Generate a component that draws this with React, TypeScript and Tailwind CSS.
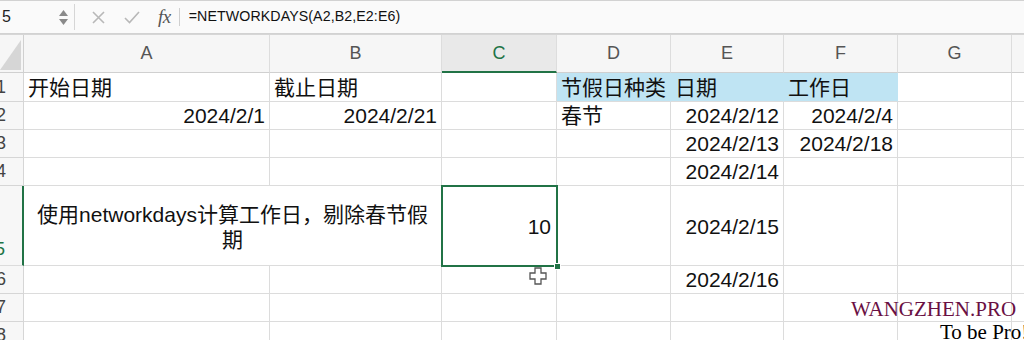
import React from 'react';

const cellFont = "font-['Liberation_Sans','Noto_Sans_CJK_SC',sans-serif]";

const cols = [
  { k: 'A', w: 'w-[246px]' },
  { k: 'B', w: 'w-[172px]' },
  { k: 'C', w: 'w-[115px]' },
  { k: 'D', w: 'w-[114px]' },
  { k: 'E', w: 'w-[113px]' },
  { k: 'F', w: 'w-[114px]' },
  { k: 'G', w: 'w-[114px]' },
  { k: 'H', w: 'w-[114px]' },
];

type Cell = { text?: string; right?: boolean; fill?: boolean };

const rows: { n: number; h: string; cells: Record<string, Cell> }[] = [
  { n: 1, h: 'h-[29px]', cells: { A: { text: '开始日期' }, B: { text: '截止日期' }, D: { text: '节假日种类', fill: true }, E: { text: '日期', fill: true }, F: { text: '工作日', fill: true } } },
  { n: 2, h: 'h-[28px]', cells: { A: { text: '2024/2/1', right: true }, B: { text: '2024/2/21', right: true }, D: { text: '春节' }, E: { text: '2024/2/12', right: true }, F: { text: '2024/2/4', right: true } } },
  { n: 3, h: 'h-[28px]', cells: { E: { text: '2024/2/13', right: true }, F: { text: '2024/2/18', right: true } } },
  { n: 4, h: 'h-[28px]', cells: { E: { text: '2024/2/14', right: true } } },
];

const after: { n: number; cells: Record<string, Cell> }[] = [
  { n: 6, cells: { E: { text: '2024/2/16', right: true } } },
  { n: 7, cells: {} },
  { n: 8, cells: {} },
];

const RowHead = ({ n, active }: { n: number; active?: boolean }) => (
  <div
    className={`w-[24px] shrink-0 bg-[#f7f7f7] flex justify-end overflow-hidden pr-[17px] text-[18px] ${
      active ? 'items-end pb-[2px] text-[#217346] border-r-2 border-[#217346] border-b border-b-[#dcdcdc]' : 'items-center text-[#444] border-r border-b border-[#d6d6d6]'
    }`}
  >
    {n}
  </div>
);

const GridCell = ({ w, cell }: { w: string; cell?: Cell }) => (
  <div
    className={`${w} shrink-0 flex items-end pb-[1px] px-[4px] whitespace-nowrap text-[21px] leading-[25px] text-[#111] border-b border-[#dcdcdc] ${
      cell?.fill ? 'bg-[#bfe4f3] border-r border-r-[#bfe4f3]' : 'border-r'
    } ${cell?.right ? 'justify-end' : 'justify-start'}`}
  >
    {cell?.text}
  </div>
);

const SimpleRow = ({ n, h, cells }: { n: number; h: string; cells: Record<string, Cell> }) => (
  <div className={`flex ${h}`}>
    <RowHead n={n} />
    {cols.map(c => (
      <GridCell key={c.k} w={c.w} cell={cells[c.k]} />
    ))}
  </div>
);

export default function App() {
  return (
    <div className={`relative w-[1024px] h-[340px] overflow-hidden bg-white ${cellFont}`}>
      {/* formula bar */}
      <div className="flex h-[34px] bg-[#fafafa] border-t border-b border-[#d2d2d2]">
        <div className="w-[75px] shrink-0 flex items-center justify-between border-r border-[#d6d6d6] my-[3px]">
          <span className="text-[16px] text-[#222] pl-[2px]">5</span>
          <div className="flex flex-col gap-[3px] mr-[6px]">
            <svg width="9" height="6" viewBox="0 0 9 6"><path d="M4.5 0L9 6H0z" fill="#8a8a8a" /></svg>
            <svg width="9" height="6" viewBox="0 0 9 6"><path d="M0 0h9L4.5 6z" fill="#8a8a8a" /></svg>
          </div>
        </div>
        <div className="flex items-center pl-[17px]">
          <svg width="13" height="13" viewBox="0 0 13 13">
            <path d="M1 1L12 12M12 1L1 12" stroke="#b8b8b8" strokeWidth="1.6" />
          </svg>
          <svg className="ml-[19px]" width="16" height="13" viewBox="0 0 16 13">
            <path d="M1 7L5.5 11.5L15 1" stroke="#b8b8b8" strokeWidth="1.6" fill="none" />
          </svg>
          <span className="ml-[18px] text-[19px] italic text-[#555] font-['Liberation_Serif',serif] tracking-[-0.5px]">fx</span>
          <div className="ml-[8px] w-px h-[18px] bg-[#cfcfcf]" />
          <span className="ml-[9px] text-[14.2px] text-[#111] tracking-[0.1px]">=NETWORKDAYS(A2,B2,E2:E6)</span>
        </div>
      </div>
      <div className="h-[1px] bg-white border-b border-[#d6d6d6]" />

      {/* column headers */}
      <div className="flex h-[38px] bg-[#f6f6f6]">
        <div className="w-[24px] shrink-0 border-r border-b border-[#d0d0d0] flex items-end justify-end pb-[2px] pr-[2px]">
          <svg width="21" height="30" viewBox="0 0 21 30">
            <path d="M21 0V30H0z" fill="#d6d6d6" />
          </svg>
        </div>
        {cols.map(c => (
          <div
            key={c.k}
            className={`${c.w} shrink-0 flex items-center justify-center text-[18px] border-r border-[#dddddd] ${
              c.k === 'C' ? 'bg-[#e9e9e9] text-[#217346] border-b-2 border-b-[#217346]' : 'text-[#555] border-b border-b-[#d0d0d0]'
            }`}
          >
            {c.k}
          </div>
        ))}
      </div>

      {/* rows 1-4 */}
      {rows.map(r => (
        <SimpleRow key={r.n} n={r.n} h={r.h} cells={r.cells} />
      ))}

      {/* row 5 */}
      <div className="flex h-[80px]">
        <RowHead n={5} active />
        <div className="w-[418px] shrink-0 flex items-center justify-center text-center text-[21px] leading-[25px] text-[#111] border-r border-b border-[#dcdcdc] pt-[2px]">
          <div>
            使用networkdays计算工作日，剔除春节假
            <br />
            期
          </div>
        </div>
        <div className="w-[115px] shrink-0 relative flex items-center justify-end px-[5px] pt-[3px] text-[21px] text-[#111] border-r border-b border-[#dcdcdc]">
          10
          <div className="absolute -left-px -top-px w-[117px] h-[82px] border-2 border-[#217346]" />
          <div className="absolute -right-[5px] -bottom-[5px] w-[7px] h-[7px] bg-[#217346] border border-white" />
        </div>
        <GridCell w="w-[114px]" />
        <div className="w-[113px] shrink-0 flex items-center justify-end px-[4px] pt-[3px] text-[21px] text-[#111] border-r border-b border-[#dcdcdc]">
          2024/2/15
        </div>
        <GridCell w="w-[114px]" />
        <GridCell w="w-[114px]" />
        <GridCell w="w-[114px]" />
      </div>

      {/* rows 6-8 */}
      {after.map(r => (
        <SimpleRow key={r.n} n={r.n} h="h-[28px]" cells={r.cells} />
      ))}

      {/* fill cursor */}
      <svg className="absolute left-[529px] top-[267px]" width="18" height="18" viewBox="0 0 18 18">
        <path d="M6 1H12V6H17V12H12V17H6V12H1V6H6z" fill="#fff" stroke="#555" strokeWidth="1.3" />
      </svg>

      {/* watermark */}
      <div className="absolute left-[851px] top-[298px] font-['Liberation_Serif',serif] text-[21px] leading-[23px] pointer-events-none">
        <div className="text-[#6a1043]">WANGZHEN.PRO</div>
        <div className="pl-[89px] text-black whitespace-nowrap">To be Pro!</div>
      </div>
    </div>
  );
}
